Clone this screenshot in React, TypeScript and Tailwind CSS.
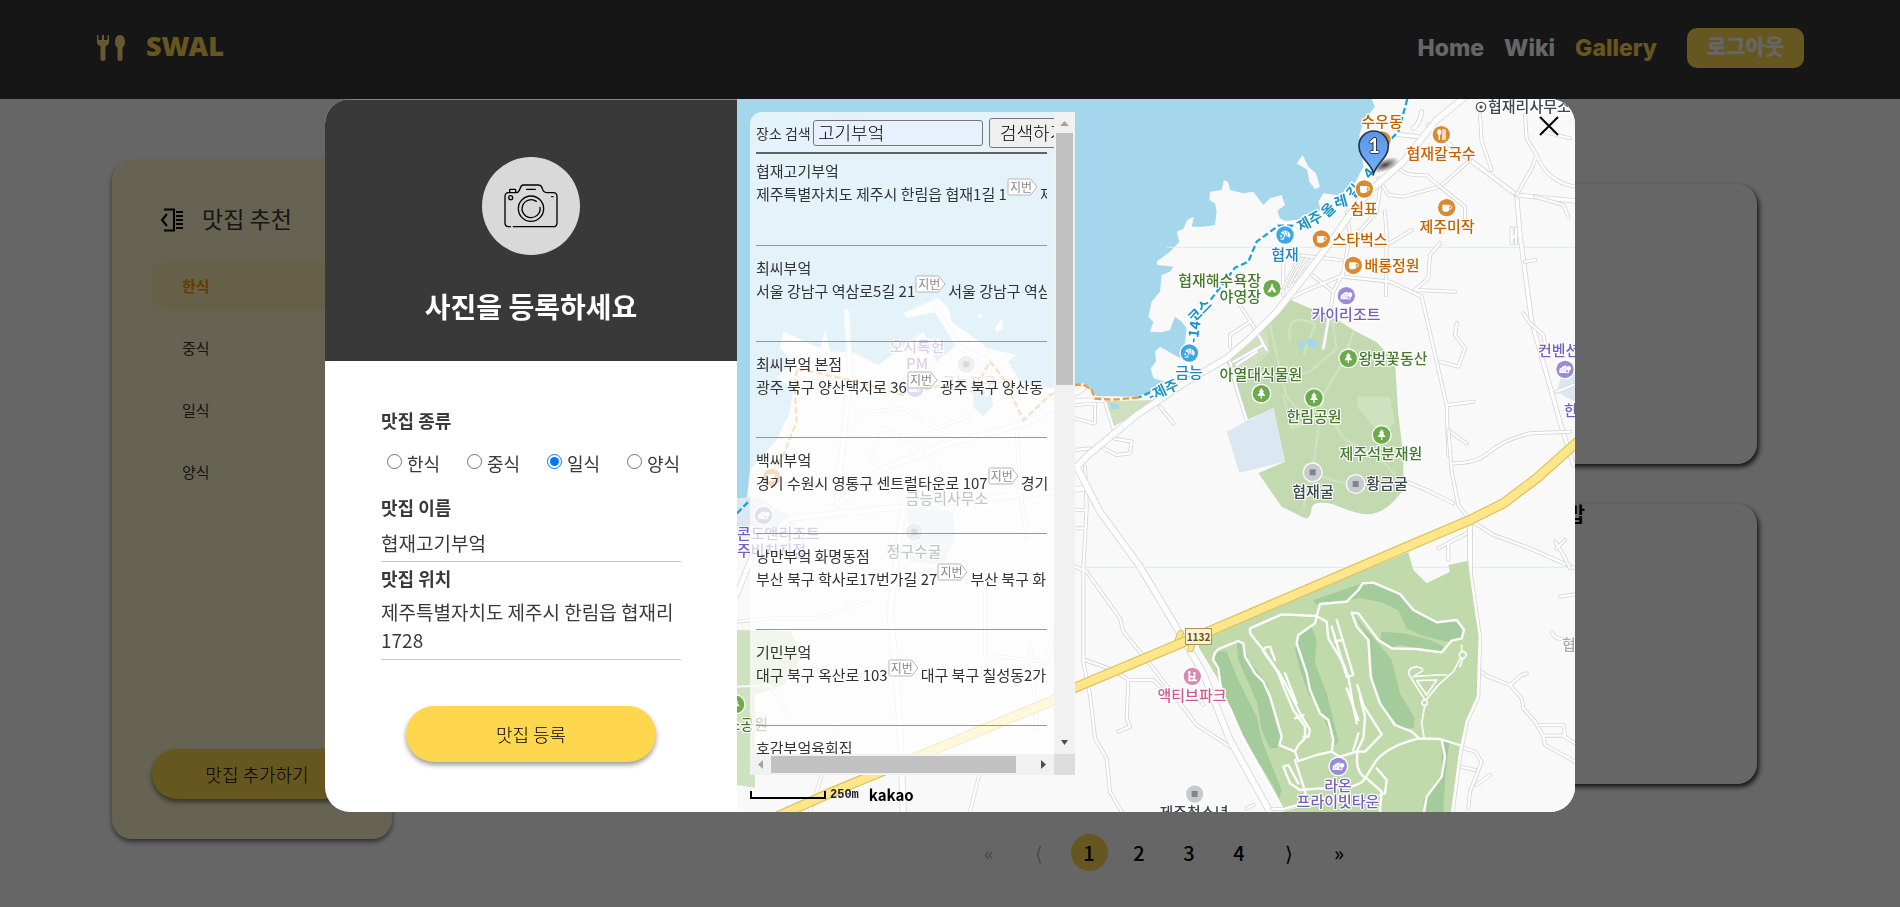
import type { ReactNode } from 'react';

const kr = "font-['Noto_Sans_CJK_KR','Noto_Sans',sans-serif]";

/* ---------- Map data ---------- */

type Tone = 'food' | 'green' | 'blue' | 'purple' | 'pink' | 'dark' | 'muted';

const toneClass: Record<Tone, string> = {
  food: 'text-[#c46200]',
  green: 'text-[#447a2e]',
  blue: 'text-[#2287c9]',
  purple: 'text-[#7661ba]',
  pink: 'text-[#cc5c95]',
  dark: 'text-[#3d4750]',
  muted: 'text-[#b3a8a8]',
};

// x / y are the anchor of a label inside the map, in pixels
const labels: { x: number; y: number; text: string; tone: Tone; align?: 'left' | 'right' }[] = [
  { x: 751, y: 7, text: '협재리사무소', tone: 'dark', align: 'left' },
  { x: 645, y: 22, text: '수우동', tone: 'food' },
  { x: 704, y: 54, text: '협재칼국수', tone: 'food' },
  { x: 627, y: 109, text: '쉼표', tone: 'food' },
  { x: 710, y: 127, text: '제주미작', tone: 'food' },
  { x: 623, y: 140, text: '스타벅스', tone: 'food' },
  { x: 655, y: 166, text: '배롱정원', tone: 'food' },
  { x: 548, y: 155, text: '협재', tone: 'blue' },
  { x: 524, y: 181, text: '협재해수욕장', tone: 'green', align: 'right' },
  { x: 524, y: 197, text: '야영장', tone: 'green', align: 'right' },
  { x: 609, y: 215, text: '카이리조트', tone: 'purple' },
  { x: 656, y: 259, text: '왕벚꽃동산', tone: 'green' },
  { x: 524, y: 275, text: '아열대식물원', tone: 'green' },
  { x: 577, y: 317, text: '한림공원', tone: 'green' },
  { x: 644, y: 354, text: '제주석분재원', tone: 'green' },
  { x: 576, y: 392, text: '협재굴', tone: 'dark' },
  { x: 650, y: 384, text: '황금굴', tone: 'dark' },
  { x: 452, y: 273, text: '금능', tone: 'blue' },
  { x: 801, y: 251, text: '컨벤션', tone: 'purple', align: 'left' },
  { x: 827, y: 311, text: '한', tone: 'purple', align: 'left' },
  { x: 825, y: 545, text: '협', tone: 'muted', align: 'left' },
  { x: 455, y: 596, text: '액티브파크', tone: 'pink' },
  { x: 601, y: 686, text: '라온', tone: 'purple' },
  { x: 601, y: 702, text: '프라이빗타운', tone: 'purple' },
  { x: 457, y: 713, text: '제주청소년', tone: 'dark' },
  { x: 180, y: 247, text: '오시록헌', tone: 'purple' },
  { x: 180, y: 264, text: 'PM', tone: 'purple' },
  { x: 232, y: 283, text: '금능포구', tone: 'muted' },
  { x: 210, y: 399, text: '금능리사무소', tone: 'dark' },
  { x: 177, y: 452, text: '정구수굴', tone: 'dark' },
  { x: 0, y: 434, text: '콘도앤리조트', tone: 'purple', align: 'left' },
  { x: 0, y: 451, text: '주비치지점', tone: 'purple', align: 'left' },
  { x: 31, y: 625, text: '소공원', tone: 'green', align: 'right' },
];

type PinKind = 'cup' | 'fork' | 'tree' | 'tent' | 'beach' | 'resort' | 'square' | 'park';

const pinFill: Record<PinKind, string> = {
  cup: '#d98a32',
  fork: '#d98a32',
  tree: '#6cab4b',
  tent: '#6cab4b',
  beach: '#3ea6e6',
  resort: '#9a8bd6',
  square: '#c9cacf',
  park: '#d987b3',
};

const pins: [PinKind, number, number][] = [
  ['cup', 936, 135],
  ['fork', 1114, 119],
  ['cup', 883, 282],
  ['cup', 1130, 338],
  ['cup', 754, 432],
  ['cup', 850, 511],
  ['beach', 645, 420],
  ['beach', 358, 774],
  ['tent', 606, 580],
  ['resort', 829, 602],
  ['tree', 835, 790],
  ['tree', 574, 896],
  ['tree', 732, 909],
  ['tree', 935, 1020],
  ['square', 728, 1132],
  ['square', 857, 1167],
  ['resort', 1485, 823],
  ['park', 367, 1744],
  ['resort', 805, 2014],
  ['square', 374, 2097],
  ['square', -311, 808],
  ['resort', -465, 880],
  ['square', -467, 1311],
  ['resort', -919, 1261],
  ['cup', -895, 1147],
  ['tree', -1003, 1828],
];

const pinGlyph: Record<PinKind, ReactNode> = {
  cup: (
    <>
      <path d="M-13-9H8V4Q8 12 1 12H-6Q-13 12-13 4Z" fill="#fff" />
      <path d="M8-6H11Q15-6 15-1T10 5H8" fill="none" stroke="#fff" strokeWidth="3" />
    </>
  ),
  fork: (
    <>
      <ellipse cx="-6" cy="-7" rx="6" ry="9" fill="#fff" />
      <path d="M-6 0V16M5-16V16M11-16V16" stroke="#fff" strokeWidth="4" />
    </>
  ),
  tree: <path d="M0-17 8-6H4L12 6H2V15H-2V6H-12L-4-6H-8Z" fill="#fff" />,
  tent: <path d="M-2-13 0-10 2-13 4-12 2-7 14 12H5L0 2-5 12H-14L-2-7-4-12Z" fill="#fff" />,
  beach: (
    <>
      <path d="M-13-6Q-4-18 8-11T14 8Z" fill="#fff" />
      <path d="M1-2-7 13M-14 12H-3" stroke="#fff" strokeWidth="3" fill="none" />
      <path d="M-5-12 4 2M6-12 8 4" stroke="#3ea6e6" strokeWidth="2" fill="none" />
      <circle cx="-12" cy="4" r="3" fill="#fff" />
    </>
  ),
  resort: (
    <>
      <path d="M-17 11V-1L-9-6V-8L4-12V11Z" fill="#fff" />
      <path d="M-11 0V8M-6-3V8M-1-5V8" stroke="#9a8bd6" strokeWidth="2" strokeDasharray="3 3" />
      <circle cx="11" cy="-3" r="7" fill="#fff" />
      <path d="M11 0V10H4" stroke="#fff" strokeWidth="3" fill="none" />
    </>
  ),
  square: <rect x="-9" y="-9" width="18" height="18" fill="#7c878d" />,
  park: (
    <>
      <path d="M-9-9V10M-9 0 5 2V12M-12 12H14M7-4V2" stroke="#fff" strokeWidth="5" fill="none" />
      <circle cx="6" cy="-9" r="4" fill="#fff" />
      <circle cx="-9" cy="-12" r="4" fill="#fff" />
    </>
  ),
};

function Road({ d, w = 7 }: { d: string; w?: number }) {
  return (
    <g fill="none" strokeLinecap="round" strokeLinejoin="round">
      <path d={d} stroke="#d6d6d6" strokeWidth={w + 5} />
      <path d={d} stroke="#fff" strokeWidth={w} />
    </g>
  );
}

function MapTerrain() {
  return (
    <svg
      className="absolute left-0 top-0 h-[713px] w-[838px]"
      viewBox="-999 12 2514 2139"
      aria-hidden="true"
    >
      <rect x="-999" y="12" width="2514" height="2139" fill="#f9f9f9" />
      {/* sea */}
      <path
        fill="#a4d7ec"
        d="M-999 12H905L915 35 895 60 880 80 868 120 880 215 862 250 845 290 815 302 760 295 745 320 752 345 710 368 680 375 645 378 630 370 622 348 645 330 635 300 600 310 580 330 550 290 520 295 480 285 475 262 462 255 455 285 420 290 418 315 435 325 440 350 435 390 400 395 365 395 372 365 352 375 340 402 320 410 328 440 300 470 260 500 262 510 310 515 300 530 275 540 270 590 245 620 235 665 250 680 240 710 275 712 300 705 315 665 335 680 350 700 345 740 340 795 270 755 255 770 258 800 242 820 250 850 312 868 240 900 200 905 80 903 60 885 40 865 15 868-60 880-150 860-185 800-160 780-250 760-265 745-355 680-365 640-395 608-500 655-490 668-400 650-365 700-330 740-400 800-440 710-575 810-655 770-720 770-735 705-750 760-860 710-870 760-830 800-880 850-830 880-840 950-880 1035-960 1125-970 1215-999 1255Z"
      />
      <path fill="#f9f9f9" d="M680 205 698 180 715 215 738 235 750 275 735 283 718 260 712 225ZM-225 700-205 670-200 700-220 712ZM-280 660-262 655-265 670Z" />
      <path fill="#dce8f1" d="M-999 1210-940 1205-830 1270-820 1320-999 1330ZM-490 1235-350 1250-345 1330-380 1410-480 1400ZM1475 840 1515 830V920L1460 890Z" />
      <path fill="#cfe2bf" d="M-999 1605-840 1608-800 1680-860 1770-945 1800V2078L-999 2070Z" />
      <path fill="#cfe0bf" d="M108 918 265 915 130 1000Z" />
      <path fill="#a4d7ec" d="M118 922 148 930 145 942 125 942ZM-290 880-240 880-230 930-260 965-290 935Z" />
      {/* park */}
      <path
        fill="#c3dab0"
        d="M655 612 720 640 780 660 850 705 920 742 975 800 985 960 1000 1080V1185L975 1215Q935 1258 890 1258 850 1255 790 1228 730 1215 725 1240 720 1275 705 1270L635 1235 565 1135 645 1100 610 940 530 975 500 880 475 800 530 760 590 690Z"
      />
      <path fill="#cfe0bf" d="M470 800 590 700 600 770 500 870 530 975 500 900Z" />
      <g fill="none" stroke="#cfe2c0" strokeWidth="7">
        <path d="M600 690 625 800 650 905 700 960M660 740Q650 670 690 675T735 690L700 780M780 640 800 760 720 830 640 850M850 710 820 800 760 900 730 1110 700 1240M790 960Q800 1030 860 1050T975 1140M640 900 665 1000 790 950M720 1130 800 1160 857 1167" />
      </g>
      <path fill="#cfe2c0" d="M860 905 960 905 975 980 940 1020 900 985 865 940Z" />
      <path fill="#a4d7ec" d="M683 740 703 742 700 768 687 760ZM706 735 728 730 745 745 735 762 712 750Z" />
      <path fill="#dce8f1" d="M470 1010 610 937 645 1100 508 1133Z" />
      <path d="M290 457H1515M15 1417H1515" stroke="#dcedf3" strokeWidth="3" />

      {/* local roads */}
      <Road d="M980 118 1045 125M1055 50Q1050 85 1030 100M1075 90 1150 160 1200 195 1340 300 1350 420 1385 680 1470 980 1510 1110" w={10} />
      <Road d="M1340 300 1515 318" w={10} />
      <Road d="M1230 60 1235 140 1265 225M1200 195 1110 275 1000 305 955 300 925 250" />
      <Road d="M985 215Q1000 245 1070 240L1110 275 1185 335 1185 370M1365 60 1370 130 1400 180 1385 220 1340 300M1400 180Q1430 260 1515 275M1420 110 1500 130" />
      <Road d="M1395 305 1480 330 1495 365M1325 400V445M1338 400V445M1325 425H1338" />
      <Road d="M930 280 920 350 850 430M830 350 840 420 820 530 790 590 760 760M945 350 950 420 948 600M1025 405 950 450M700 520 790 590M820 545 960 560 1055 605 1100 800 1130 930 1135 1080M820 540 700 590 660 610M680 480 810 495M1035 585 1075 550 1080 480 1110 445M1035 585 1155 590M1160 685 1155 720 1185 760 1165 815 1110 800M1135 930 1210 920M1140 1010 1190 1045M1365 500 1395 495" />
      <Road d="M640 480V600M510 630 560 710 590 765M480 720 540 680M480 720V755M490 800 580 750M500 810 560 770" />
      <Road d="M640 580 690 480M655 575 700 490M670 560 715 495" w={4} />
      <Road d="M1360 655 1380 685 1420 720 1425 745M1460 890 1510 870" />
      <Road d="M480 800 500 880 530 975M105 920 130 1000 180 970M270 935 310 985M15 930 75 925 75 985M15 970 70 985M130 1030 185 1040 180 1075 140 1080 100 1060M15 1065 60 1060" />
      <Road d="M1150 1105Q1220 1105 1260 1070T1380 1015L1500 1010M1135 1005 1145 1130 1165 1230 1200 1275 1270 1320 1380 1360 1515 1420" />
      <Road d="M1010 1160 1080 1190 1150 1225M1200 1310 1105 1360M1135 1350V1395M1455 1340 1480 1380 1500 1420M1485 1335 1460 1360M1470 1505 1515 1498M1445 1610Q1450 1635 1490 1632" />
      <Road d="M45 1115 50 1240 40 1420V1700L60 1800 75 1930 110 1990 120 2090 155 2150M15 1245H45M15 1300H40M15 1415 50 1430 150 1570 160 1610 250 1720 380 1890 480 1955M45 1695 130 1725 175 1755 250 1755 270 1775M175 1755 170 1870 180 1895 145 1910" />
      <Road d="M1225 1725 1255 1745 1320 1770 1355 1740 1370 1735M1320 1770 1355 1810 1360 1840 1395 1880 1420 1925 1425 1950 1515 2000M1410 1890 1480 1890 1485 1920M1420 1922H1480L1515 1945M1170 1955 1215 1970 1235 2000 1200 2090 1195 2140M1170 2015 1215 2025M1260 2040 1220 2070" />
      <Road d="M380 1800 400 1830M530 2140 550 2130" />
      <g opacity="0.8">
        <Road d="M-670 650-660 840-690 1130-700 1230M-1000 1500-940 1350-840 1270-500 1235-40 1190 45 1180" w={14} />
        <Road d="M-700 1230-580 1130-380 1050-130 985 40 880" w={14} />
        <Road d="M-500 1235-540 1550-520 1750-510 1900-500 2151" w={16} />
        <Road d="M-680 1000-600 950-500 940-400 1000-300 960M-600 1100-560 1000-450 1060-390 1120M-255 1440-255 1680-70 1700 0 1440M-160 1000-150 1180-130 1330M-999 1580-900 1570-760 1570-600 1520M-1000 1775-900 1770-850 1850M-300 2150-270 2030M-120 1650-100 1900M-780 2151-700 1900" />
        <Road d="M-400 650-330 760-240 800-200 870-60 920 100 915M-240 800-250 900" w={12} />
      </g>
      <Road d="M1200 1270V1440L1228 1630 1222 1805 1188 1880 1168 1980 1145 2151" w={12} />

      {/* golf course */}
      <path fill="#c1daab" d="M405 1620 1015 1372 1030 1425 1070 1465 1140 1430 1135 1410 1195 1397 1200 1445 1226 1625 1220 1805 1188 1875 1168 1965 1143 2151H640L545 1965 485 1855 440 1745 385 1655Z" />
      <g transform="translate(0 1005)" fill="#a4cb9b">
        <path d="M430 690 440 662 470 665 500 740 560 860 575 930 635 1080 628 1105 600 1050 510 910 440 720Z" />
        <path d="M500 640H520L535 690 590 760 635 920 620 955 600 955 575 900 562 820 505 690Z" />
        <path d="M675 660 690 610 725 590 740 630 735 700 770 790 795 890 805 935 795 945 760 860 715 790 690 720Z" />
        <path d="M730 510 790 490 870 462 910 457 990 492 1030 545 1105 580 1165 572 1182 605 1175 628 1130 635 1050 615 1010 595 985 540 930 515 870 505 735 522Z" />
        <path d="M850 550 880 590 925 640 965 690 990 790 1035 865 1030 895 990 895 930 820 910 770 900 640Z" />
        <path d="M935 605 1000 610 1080 630 1130 655 1110 665 1040 655 990 645 960 655 930 635Z" />
        <path d="M1115 935H1138L1125 1050 1120 1146H1062L1060 1110 1115 1030Z" />
      </g>
      <g transform="translate(0 1005)" fill="none" stroke="#fff" strokeWidth="7" strokeLinejoin="round" strokeLinecap="round">
        <path d="M640 1140 590 1050 545 970 515 915 480 835 455 790 445 715 430 690Q430 665 450 655L505 633 520 640 525 680 555 730 580 755 600 800 635 920 628 945 675 965 685 945 705 925 705 890 670 840 640 770 625 730 580 660 540 610V595L635 553 740 558 770 575 775 625 820 700 835 740 850 830 860 880" />
        <path d="M740 558 750 522 830 515 865 480 878 460 910 458 990 492 1030 540 1100 577 1160 570 1182 600 1175 625 1145 632 1115 667 1040 657 965 655 925 630 865 550 845 548 860 590 895 630 902 740 930 820 975 885 1025 905 1048 925" />
        <path d="M740 560 735 580 685 615 680 640 710 730 720 780 750 850 775 870 790 930 785 965 740 975 685 993 675 965" />
        <path d="M785 965 810 980 860 965 885 965 935 913 880 825 862 765M800 570 850 735 835 740M785 590 830 740M830 775 865 870M850 960 865 910M860 965 880 925 885 860 870 800M600 650Q580 650 580 665L625 725 650 770 690 850 720 900 715 920 700 920M600 650 615 690M645 730 680 820M675 865 700 855M795 635 815 630" />
        <path d="M1048 925 1110 927 1168 945M1048 925Q960 945 920 990L885 1045Q865 1080 750 1075L690 1080 660 1060 640 1010 655 1005 685 1060M862 970Q855 1030 890 1045L935 1085 930 1146M1115 930 1125 980 1115 1040 1070 1100 1062 1146M675 990 710 1100M640 1140 800 1100M920 1015 950 1050 945 1090 930 1095" />
        <g strokeWidth="5">
          <path d="M1062 922 1055 880 1064 828M1064 808 1018 735Q1010 715 1040 710L1058 716M1058 722 1030 740M1070 808 1105 765 1150 725 1172 684M1175 663V645M1178 686 1170 710M1030 740 1100 735 1130 735M1040 752 1070 795 1100 750Z" />
          <circle cx="1178" cy="675" r="10" />
          <circle cx="1064" cy="818" r="8" />
        </g>
      </g>

      {/* main road */}
      <Road d="M1185 5 1100 75 1000 200 920 270 860 330 790 430 700 550 620 650 540 730 470 790 350 860 200 960 60 1075 20 1115 90 1250 210 1415 330 1615 400 1735 480 1935 605 2160" w={17} />
      <Road d="M605 2142 640 2142 760 2110" w={6} />
      <g fill="none" strokeLinecap="round" strokeLinejoin="round">
        <path d="M332 1615 322 1640M366 1645 362 1662" stroke="#dcc25a" strokeWidth="20" />
        <path d="M332 1615 322 1640M366 1645 362 1662" stroke="#ffe68a" strokeWidth="14" />
        <path d="M1540 1025 1400 1150 1300 1225 1200 1275 1000 1360 420 1608 15 1778-48 1815-445 1980-715 2092-890 2170" stroke="#dcc25a" strokeWidth="31" />
        <path d="M1540 1025 1400 1150 1300 1225 1200 1275 1000 1360 420 1608 15 1778-48 1815-445 1980-715 2092-890 2170" stroke="#ffe68a" strokeWidth="24" />
      </g>

      {/* walking trails */}
      <g fill="none" strokeWidth="7" strokeDasharray="19 9">
        <path d="M1012 12 985 110 960 135 900 215 850 280 730 370 625 392 560 440 535 500 495 518 475 545 410 630 365 690 365 760 350 830 300 880 205 908" stroke="#fff" strokeWidth="11" strokeDasharray="none" />
        <path d="M1012 12 985 110 960 135M670 392 625 392 560 440 535 500 495 518 475 545 410 630M240 892 205 908M-999 1255-960 1215" stroke="#21a3d8" />
        <path d="M205 908 130 914 75 911 65 885 40 868 15 870-60 900-140 975-200 850-240 800-290 890-380 870-500 900-640 860-820 820-825 900-820 980-860 1080-900 1140" stroke="#ef9a35" />
      </g>
      <g
        fill="#1b93c9"
        stroke="#fff"
        strokeWidth="8"
        paintOrder="stroke"
        fontSize="43"
        fontWeight="700"
        textAnchor="middle"
        dominantBaseline="central"
        fontFamily="'Noto Sans CJK KR', sans-serif"
      >
        <text transform="translate(717 375) rotate(-28)">제주</text>
        <text transform="translate(772 342) rotate(-45)">올</text>
        <text transform="translate(811 316) rotate(-15)">레</text>
        <text transform="translate(848 286) rotate(-50)">길</text>
        <text transform="translate(893 232) rotate(-50)">4</text>
        <text transform="translate(386 645) rotate(-45)">코스</text>
        <text transform="translate(368 710) rotate(-82)">-14</text>
        <text transform="translate(278 882) rotate(-25)">-제주</text>
      </g>

      {/* points of interest */}
      {pins.map(([kind, x, y]) => (
        <g key={`${x}-${y}`} transform={`translate(${x} ${y})`}>
          <circle r="30" fill="#fff" />
          <circle r="26" fill={pinFill[kind]} />
          {pinGlyph[kind]}
        </g>
      ))}
      <g transform="translate(1233 36)">
        <circle r="14" fill="#fff" stroke="#4a545c" strokeWidth="4" />
        <circle r="5" fill="#4a545c" />
      </g>

      {/* selected place marker */}
      <defs>
        <linearGradient id="marker" x1="0" y1="0" x2="0" y2="1">
          <stop offset="0" stopColor="#5f93e4" />
          <stop offset="1" stopColor="#6fb2ff" />
        </linearGradient>
        <radialGradient id="markerShadow">
          <stop offset="0" stopColor="#000" stopOpacity="0.75" />
          <stop offset="1" stopColor="#000" stopOpacity="0" />
        </radialGradient>
      </defs>
      <ellipse cx="945" cy="210" rx="45" ry="19" fill="url(#markerShadow)" transform="rotate(-22 945 210)" />
      <path d="M911 235C900 200 867 190 867 152A44 44 0 0 1 955 152C955 190 922 200 911 235Z" fill="url(#marker)" stroke="#26354f" strokeWidth="5" />
    </svg>
  );
}

function MapLabel({ x, y, text, tone, align }: (typeof labels)[number]) {
  const shift =
    align === 'left' ? '-translate-y-1/2' : align === 'right' ? '-translate-x-full -translate-y-1/2' : '-translate-x-1/2 -translate-y-1/2';
  return (
    <span
      className={`absolute whitespace-nowrap text-[15px] leading-[18px] font-medium [text-shadow:1px_0_#fff,-1px_0_#fff,0_1px_#fff,0_-1px_#fff,1px_1px_#fff,-1px_-1px_#fff,1px_-1px_#fff,-1px_1px_#fff] ${toneClass[tone]} ${shift}`}
      style={{ left: x, top: y }}
    >
      {text}
    </span>
  );
}

/* ---------- Search panel ---------- */

const results = [
  { name: '협재고기부엌', road: '제주특별자치도 제주시 한림읍 협재1길 1', lot: '제주특별자치도 제주시' },
  { name: '최씨부엌', road: '서울 강남구 역삼로5길 21', lot: '서울 강남구 역삼동' },
  { name: '최씨부엌 본점', road: '광주 북구 양산택지로 36', lot: '광주 북구 양산동 9' },
  { name: '백씨부엌', road: '경기 수원시 영통구 센트럴타운로 107', lot: '경기' },
  { name: '낭만부엌 화명동점', road: '부산 북구 학사로17번가길 27', lot: '부산 북구 화명동' },
  { name: '기민부엌', road: '대구 북구 옥산로 103', lot: '대구 북구 칠성동2가' },
  { name: '호감부엌육회집', road: '', lot: '' },
];

function LotBadge() {
  return (
    <span className="relative -mt-1 mr-0.5 flex h-[18px] w-[31px] shrink-0 items-center pl-[3px] text-[12px] leading-[16px] text-[#8a8a8a]">
      <svg className="absolute inset-0" width="31" height="18" viewBox="0 0 31 18" aria-hidden="true">
        <path d="M2.5 1H23.5L30 9 23.5 17H2.5Q1 17 1 15.500V2.500Q1 1 2.500 1Z" fill="#fff" stroke="#b5b5b5" />
      </svg>
      <span className="relative">지번</span>
    </span>
  );
}

function SearchPanel() {
  return (
    <section className="absolute top-[13px] bottom-[37px] left-[13px] grid w-[325px] grid-cols-[minmax(0,1fr)_21px] grid-rows-[minmax(0,1fr)_21px] overflow-hidden rounded-tl-xl bg-white/70 text-[#333]">
      <div className="overflow-hidden pl-1.5">
        <form className="mt-1.5 flex h-[30px] items-center whitespace-nowrap" onSubmit={(e) => e.preventDefault()}>
          <label htmlFor="keyword" className="w-[57px] shrink-0 text-[14px]">
            장소 검색
          </label>
          <input
            id="keyword"
            defaultValue="고기부엌"
            className="h-[26px] w-[170px] shrink-0 rounded-[3px] border border-[#767676] bg-[#e8f0fe] px-1 pb-0.5 text-[18px] font-light text-black"
          />
          <button className="ml-1.5 h-[30px] shrink-0 rounded-[3px] border border-[#767676] bg-[#efefef] px-2.5 pb-0.5 text-[18px] leading-[26px] font-light text-black">
            검색하기
          </button>
        </form>
        <hr className="mt-1 mr-[7px] border-t-2 border-[#5f6460]" />
        <ul className="mr-[7px] overflow-hidden">
          {results.map((r) => (
            <li
              key={r.name}
              className="h-24 border-b border-[#979797] pt-2.5 text-[15px] leading-[23px] whitespace-nowrap first:h-[92px] first:pt-[5px]"
            >
              <p>{r.name}</p>
              {r.road && (
                <p className="flex items-start">
                  <span className="shrink-0">{r.road}</span>
                  <LotBadge />
                  <span className="shrink-0">{r.lot}</span>
                </p>
              )}
            </li>
          ))}
        </ul>
      </div>
      <div className="flex flex-col items-center bg-[#f1f1f1]">
        <svg className="h-[21px] w-[21px] shrink-0" viewBox="0 0 21 21" aria-hidden="true">
          <path d="M6 14 10.500 9 15 14Z" fill="#a3a3a3" />
        </svg>
        <div className="h-[252px] w-[17px] bg-[#c1c1c1]" />
        <svg className="mt-auto h-[21px] w-[21px] shrink-0" viewBox="0 0 21 21" aria-hidden="true">
          <path d="M7 7H14L10.500 12Z" fill="#505050" />
        </svg>
      </div>
      <div className="flex items-center bg-[#f1f1f1]">
        <svg className="h-[21px] w-[21px] shrink-0" viewBox="0 0 21 21" aria-hidden="true">
          <path d="M13 6V15L8 10.500Z" fill="#a3a3a3" />
        </svg>
        <div className="h-[17px] w-[245px] bg-[#c1c1c1]" />
        <svg className="ml-auto h-[21px] w-[21px] shrink-0" viewBox="0 0 21 21" aria-hidden="true">
          <path d="M8 6V15L13 10.500Z" fill="#505050" />
        </svg>
      </div>
      <div className="bg-[#dcdcdc]" />
    </section>
  );
}

function MapPane() {
  return (
    <div className="relative min-w-0 flex-1 overflow-hidden bg-[#f9f9f9]">
      <MapTerrain />
      {labels.map((l) => (
        <MapLabel key={l.text + l.x} {...l} />
      ))}
      <span className="absolute top-[34px] left-[637px] -translate-x-1/2 font-['Lato',sans-serif] text-[20px] leading-[24px] font-bold text-white [text-shadow:1px_0_#26354f,-1px_0_#26354f,0_1px_#26354f,0_-1px_#26354f]">
        1
      </span>
      <span className="absolute top-[529px] left-[448px] flex h-[17px] w-[27px] items-center justify-center border border-[#a68f6a] bg-[#fff3c4] text-[10px] font-bold text-[#5d5340]">
        1132
      </span>
      <SearchPanel />
      <div className="absolute bottom-[7px] left-[13px] flex items-center leading-[20px] text-black">
        <span className="mr-1 h-2 w-[76px] border-2 border-t-0 border-black" />
        <span className="font-['Liberation_Mono',monospace] text-[12px] font-bold text-[#222]">250m</span>
        <span className="ml-2.5 text-[15px] font-bold">kakao</span>
      </div>
      <button aria-label="닫기" className="absolute top-[17px] right-[16px] h-5 w-5">
        <svg viewBox="0 0 20 20" className="h-5 w-5" aria-hidden="true">
          <path d="M1 1 19 19M19 1 1 19" stroke="#000" strokeWidth="2" />
        </svg>
      </button>
    </div>
  );
}

/* ---------- Register form ---------- */

const kinds = ['한식', '중식', '일식', '양식'];

function RegisterForm() {
  return (
    <div className="w-[412px] shrink-0 bg-white">
      <label className="flex h-[262px] flex-col items-center border-t border-[#858585] bg-[#393939] pt-[57px]">
        <span className="flex h-[98px] w-[98px] items-center justify-center rounded-full bg-[#d9d9d9]">
          <svg width="54" height="44" viewBox="0 0 162 132" fill="none" stroke="#000" strokeWidth="4" strokeLinecap="round" aria-hidden="true">
            <path d="M19 128H14Q3 128 3 117V38Q3 26 14 26H36Q44 26 48 14T59 3H103Q112 3 115 14T128 26H148Q159 26 159 38V116Q159 128 147 128H28" />
            <path d="M17 25V18Q17 16 19 16H33Q35 16 35 18V25M68 16H94M143 38H147" />
            <circle cx="20" cy="41" r="6" />
            <circle cx="81" cy="74" r="38" />
            <path d="M108 70A27 27 0 1 1 97 52" />
          </svg>
        </span>
        <span className="mt-[31px] text-[28px] leading-[40px] font-bold text-white">사진을 등록하세요</span>
        <input type="file" className="sr-only" />
      </label>
      <form className="px-14 pt-[47px] pb-[50px] text-[18px] leading-[24px] text-[#393939]" onSubmit={(e) => e.preventDefault()}>
        <fieldset>
          <legend className="font-bold">맛집 종류</legend>
          <div className="mt-[19px] flex pl-1.5">
            {kinds.map((k) => (
              <label key={k} className="flex w-20 shrink-0 items-center gap-[5px]">
                <input type="radio" name="kind" defaultChecked={k === '일식'} className="mb-1 h-[15px] w-[15px] accent-[#0075ff]" />
                {k}
              </label>
            ))}
          </div>
        </fieldset>
        <label htmlFor="name" className="mt-5 block font-bold">
          맛집 이름
        </label>
        <input
          id="name"
          defaultValue="협재고기부엌"
          className="mt-2.5 block h-[33px] w-full border-b border-[#c8c8c8] pb-1.5 text-[19px] leading-[28px]"
        />
        <label htmlFor="place" className="mt-1 block font-bold">
          맛집 위치
        </label>
        <textarea
          id="place"
          rows={2}
          defaultValue="제주특별자치도 제주시 한림읍 협재리 1728"
          className="mt-2 block h-[62px] w-full resize-none overflow-hidden border-b border-[#c8c8c8] pb-1 text-[19px] leading-[28px]"
        />
        <button className="mx-auto mt-[46px] block h-14 w-[250px] rounded-full bg-[#ffd74f] font-light text-black shadow-[0_3px_5px_rgba(0,0,0,0.4)]">
          맛집 등록
        </button>
      </form>
    </div>
  );
}

/* ---------- Page behind the dialog ---------- */

function Header() {
  return (
    <header className="flex h-[99px] items-center bg-[#393939] px-24 pb-1 font-black text-white">
      <a href="#home" className="flex items-center gap-5 text-[#ffd74f]">
        <svg width="30" height="28" viewBox="0 0 30 28" fill="#ffdc80" aria-hidden="true">
          <path d="M1 1H2.500V6H6V1H8V6H11.500V1H13V8Q13 11 9.500 12V25Q9.500 27 7 27T4.500 25V12Q1 11 1 8Z" />
          <path d="M24 1C27 1 29 4 29 8 29 11 27.500 12.500 26.500 13.500V25Q26.500 27 24 27T21.500 25V13.500C20 12.500 19 11 19 8 19 4 21 1 24 1Z" />
        </svg>
        <span className="pb-1 font-['Noto_Sans','Noto_Sans_CJK_KR',sans-serif] text-[27px] leading-[32px] font-black">SWAL</span>
      </a>
      <nav className="ml-auto flex items-center gap-5 font-['Inter','Noto_Sans_CJK_KR',sans-serif] text-[23px] leading-[36px] font-extrabold">
        <a href="#home">Home</a>
        <a href="#wiki">Wiki</a>
        <a href="#gallery" className="text-[#ffd74f]">
          Gallery
        </a>
        <button className="ml-2.5 flex h-10 w-[117px] items-center justify-center rounded-[10px] bg-[#ffd74f] pb-0.5 text-[21px] font-black">
          로그아웃
        </button>
      </nav>
    </header>
  );
}

function Sidebar() {
  return (
    <aside className="flex h-[679px] w-[280px] shrink-0 flex-col rounded-[20px] bg-[#fff7cd] px-10 pt-[42px] pb-10 shadow-[0_3px_5px_rgba(0,0,0,0.5)]">
      <h2 className="flex items-center gap-[18px] pl-2 text-[23px] leading-[32px] text-[#393939]">
        <svg width="24" height="24" viewBox="0 0 24 24" fill="none" stroke="#000" strokeWidth="2" aria-hidden="true" className="mt-1">
          <path d="M4 1.500H14V22.500H4M7 6 2 12 7 18M16 4H23M16 8H23M16 12H23M16 16H23M16 20H23" />
        </svg>
        맛집 추천
      </h2>
      <ul className="mt-7 flex flex-col gap-3.5 text-[15px] text-[#393939]">
        {kinds.map((k) => (
          <li key={k}>
            <a
              href={`#${k}`}
              className="flex h-12 items-center rounded-xl pl-[30px] aria-[current]:bg-[#ffefb5] aria-[current]:font-bold aria-[current]:text-[#ff9500]"
              aria-current={k === '한식' ? 'page' : undefined}
            >
              {k}
            </a>
          </li>
        ))}
      </ul>
      <button className="mt-auto h-[50px] w-[210px] rounded-full bg-[#ffd74f] text-[18px] font-light shadow-[0_3px_5px_rgba(0,0,0,0.5)]">맛집 추가하기</button>
    </aside>
  );
}

function Gallery() {
  return (
    <main className="flex min-w-0 flex-1 flex-col pt-6">
      <div className="grid grid-cols-2 gap-x-[50px] gap-y-10">
        {['', '', '', '밥'].map((title, i) => (
          <article key={i} className="h-[280px] rounded-[20px] bg-white pr-[172px] text-right shadow-[2px_3px_5px_rgba(0,0,0,0.8)]">
            {title && <h3 className="text-[20px] leading-[20px] font-bold">{title}</h3>}
          </article>
        ))}
      </div>
      <nav aria-label="페이지" className="mt-[50px] flex justify-center gap-[13px] text-[20px] leading-[24px] font-medium text-black">
        {['«', '⟨', '1', '2', '3', '4', '⟩', '»'].map((p, i) => (
          <button
            key={p}
            disabled={i < 2}
            aria-current={p === '1' ? 'page' : undefined}
            className="flex h-[37px] w-[37px] items-center justify-center rounded-full disabled:text-black/30 aria-[current]:bg-[#ffd74f]"
          >
            {p}
          </button>
        ))}
      </nav>
    </main>
  );
}

export default function App() {
  return (
    <div className={`min-h-screen bg-white ${kr}`}>
      <Header />
      <div className="flex gap-[179px] pt-[61px] pr-[143px] pb-[67px] pl-[112px]">
        <Sidebar />
        <Gallery />
      </div>
      <div className="fixed inset-0 flex items-start justify-center bg-black/60 pt-[99px]">
        <div role="dialog" aria-modal="true" className="flex w-full max-w-[1250px] overflow-hidden rounded-[25px]">
          <RegisterForm />
          <MapPane />
        </div>
      </div>
    </div>
  );
}
